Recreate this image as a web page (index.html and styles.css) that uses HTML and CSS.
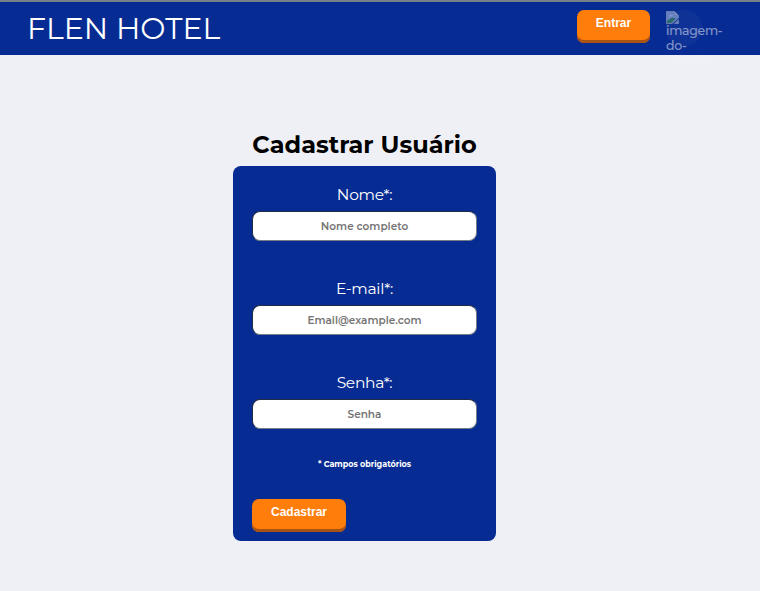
FILE: index.html
```html
<!DOCTYPE html>
<html lang="pt-BR">
<head>
<meta charset="utf-8">
<title>Flen Hotel</title>
<link rel="stylesheet" href="styles.css">
</head>
<body>
<header class="topbar">
  <div class="brand">FLEN HOTEL</div>
  <div class="account">
    <button class="btn btn-login" type="button">Entrar</button>
    <div class="avatar">
      <svg class="broken" width="16" height="16" viewBox="0 0 16 16" aria-hidden="true">
        <path d="M.5 1.500h8l4 4V8L6 13.500H.5z" fill="#c4d5f3" stroke="#c8ccd4"/>
        <path d="M8.500 1.500v4h4z" fill="#fff" stroke="#c8ccd4"/>
        <path d="M3 6.500q0-2 2-2 2 0 2 2z" fill="#fff"/>
        <path d="M1 13v-2L6 7.500l4 1L5 13z" fill="#4ea846"/>
        <path d="M8.500 13.500h4v-3.500z" fill="#c4d5f3" stroke="#c8ccd4"/>
      </svg>
      <span class="alt">imagem-<br>do-<br><span class="alt-overflow">usuario</span></span>
    </div>
  </div>
</header>
<main class="register">
  <h1 class="title">Cadastrar Usuário</h1>
  <form class="card">
    <label class="label" for="nome">Nome*:</label>
    <input class="field" id="nome" type="text" placeholder="Nome completo">
    <label class="label" for="email">E-mail*:</label>
    <input class="field" id="email" type="email" placeholder="Email@example.com">
    <label class="label" for="senha">Senha*:</label>
    <input class="field" id="senha" type="password" placeholder="Senha">
    <p class="note">* Campos obrigatórios</p>
    <button class="btn btn-submit" type="button">Cadastrar</button>
  </form>
</main>
</body>
</html>
```
FILE: styles.css
```css
* { box-sizing: border-box; }
body {
  margin: 0;
  height: 591px;
  overflow: hidden;
  background: #eff0f6;
  font-family: Montserrat, Inter, sans-serif;
}
.topbar {
  height: 55px;
  display: flex;
  justify-content: space-between;
  padding: 8px 38px 0 27px;
  background: #062b92;
  border-top: 2px solid #76808a;
}
.brand {
  color: #fff;
  font-size: 30px;
  font-weight: 400;
  line-height: 37px;
}
.account { display: flex; gap: 16px; }
.btn {
  border: 0;
  border-radius: 7px;
  background: #ff7d0b;
  box-shadow: inset 0 -3px 0 #a95314;
  color: #fff;
  font: bold 12px/14px "Liberation Sans", sans-serif;
  height: 33px;
  padding: 0 0 8px;
}
.btn-login { width: 73px; }
.avatar {
  width: 56px;
  height: 37px;
  opacity: .5;
  color: #fff;
  background: radial-gradient(circle at 18px 18px, rgba(255, 255, 255, .07) 18px, transparent 18.500px);
}
.broken { display: block; }
.alt {
  display: block;
  margin-top: -3px;
  font-size: 12.500px;
  font-weight: 500;
  line-height: 15px;
  letter-spacing: -.3px;
}
.alt-overflow { opacity: .3; }
.register {
  width: 263px;
  margin: 75px 0 0 233px;
}
.title {
  margin: 0;
  height: 36px;
  color: #000;
  font-size: 24px;
  font-weight: 700;
  line-height: 29px;
  text-align: center;
  white-space: nowrap;
}
.card {
  display: flex;
  flex-direction: column;
  height: 375px;
  padding: 19px 19px 0;
  border-radius: 8px;
  background: #062b92;
  color: #fff;
}
.label {
  font-size: 15.500px;
  line-height: 20px;
  letter-spacing: -.3px;
  text-align: center;
}
.field {
  width: 225px;
  height: 30px;
  margin: 6px 0 38px;
  padding: 1px 2px;
  border: 1px solid;
  border-color: #222b46 #777c86 #777c86 #222b46;
  border-radius: 8px;
  background: #fff;
  font: 600 10.500px Montserrat, Inter, sans-serif;
  text-align: center;
}
.field::placeholder { color: #757575; opacity: 1; }
.note {
  margin: -9px 0 0;
  font-size: 8px;
  font-weight: 700;
  line-height: 12px;
  text-align: center;
}
.btn-submit {
  width: 94px;
  margin-top: 29px;
}
```
